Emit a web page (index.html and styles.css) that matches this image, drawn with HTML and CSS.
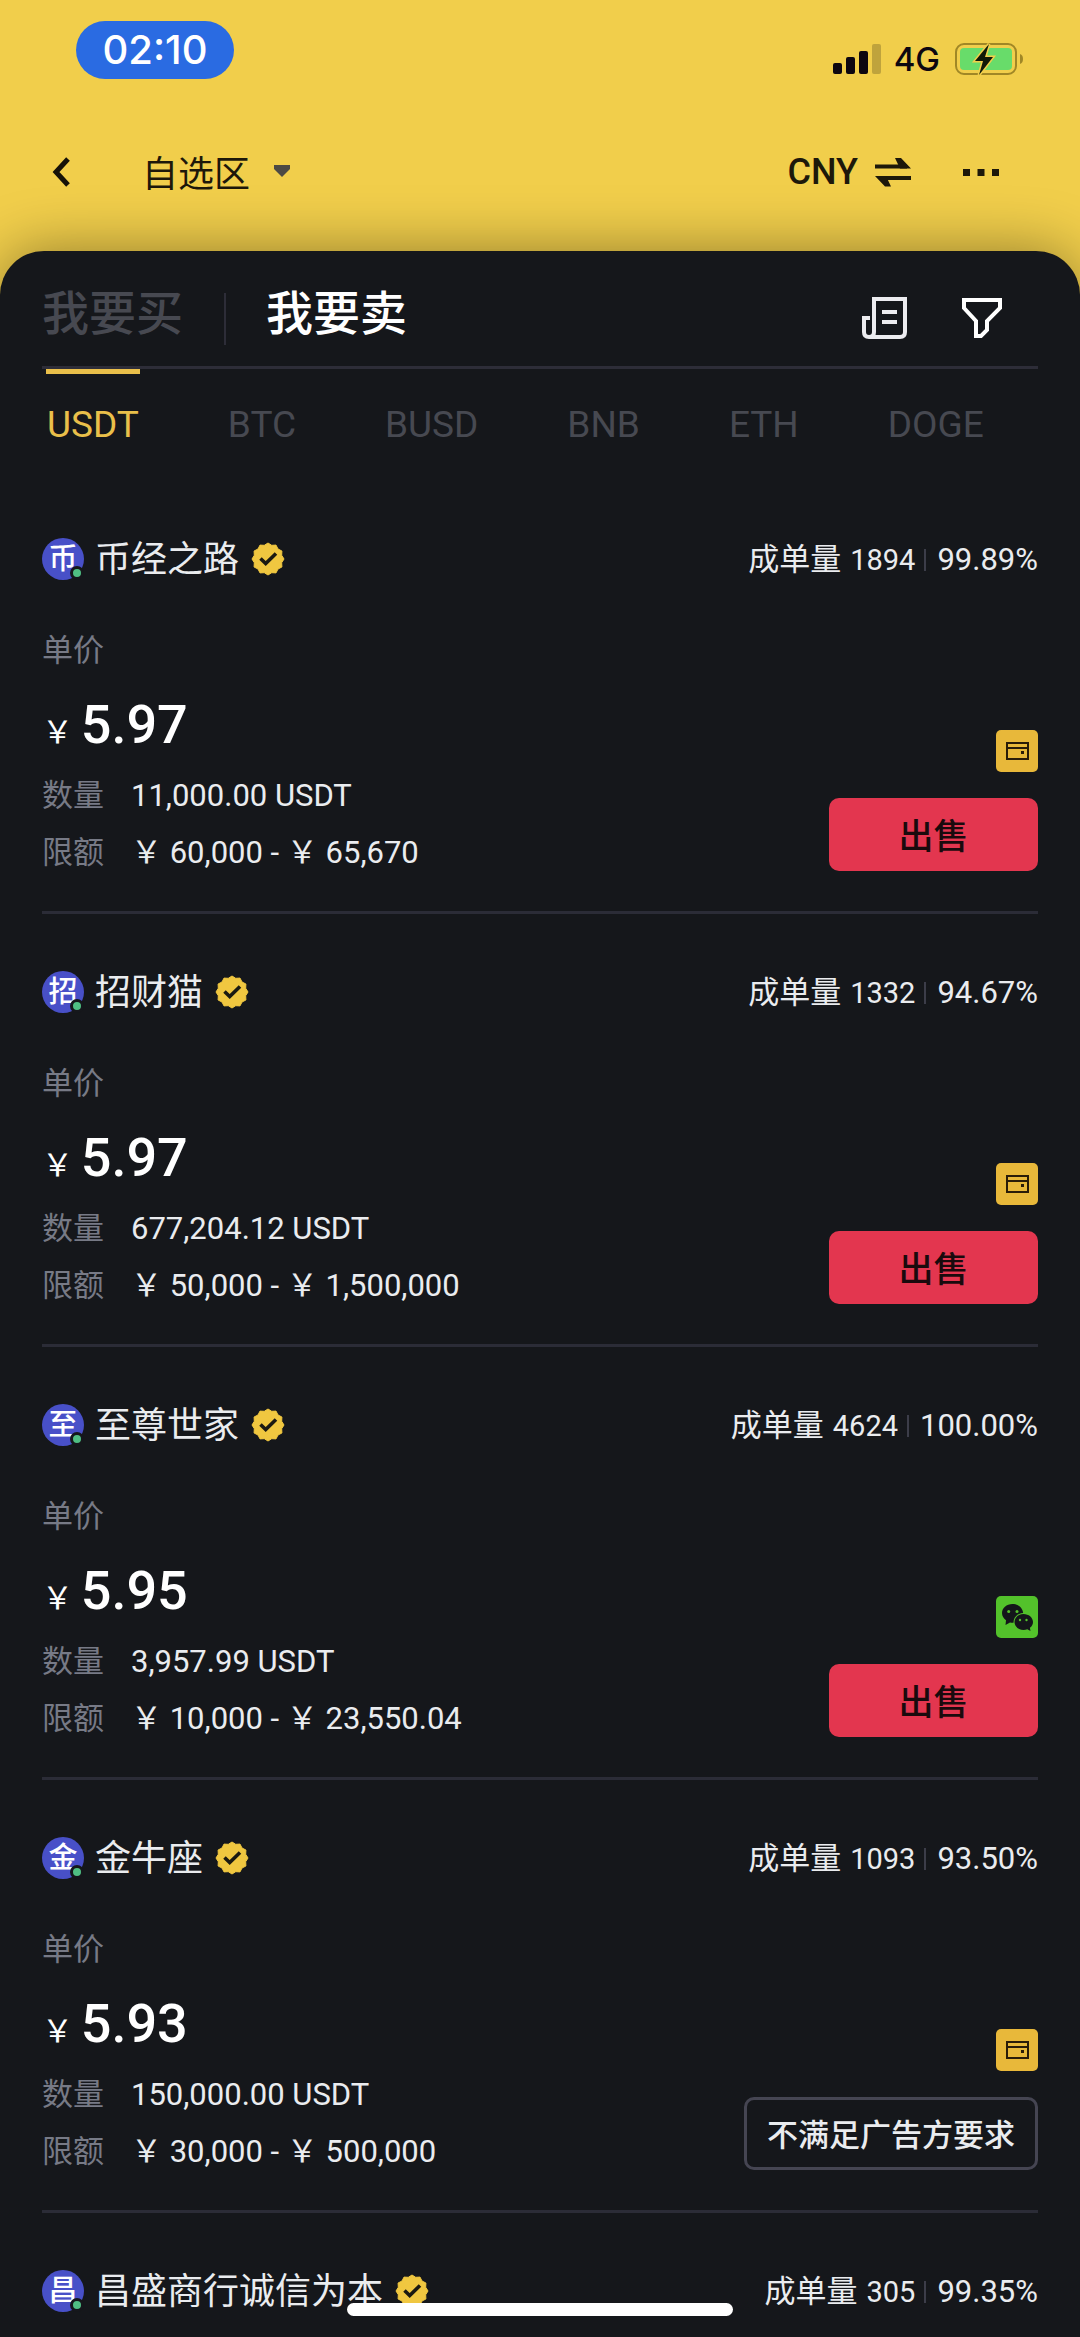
FILE: index.html
```html
<!DOCTYPE html>
<html lang="zh-CN">
<head>
<meta charset="utf-8">
<meta name="viewport" content="width=device-width, initial-scale=1">
<title>自选区</title>
<link rel="stylesheet" href="styles.css">
</head>
<body>
<svg class="sprite" aria-hidden="true">
  <symbol id="badge" viewBox="0 0 34 34">
    <path d="M33 17 30.7 20.7 30.9 25 27 27 25 30.9 20.7 30.7 17 33 13.3 30.7 9 30.9 7 27 3.1 25 3.3 20.7 1 17 3.3 13.3 3.1 9 7 7 9 3.1 13.3 3.3 17 1 20.7 3.3 25 3.1 27 7 30.9 9 30.7 13.3Z" fill="#f0c740" stroke="#f0c740" stroke-width="1" stroke-linejoin="round"/>
    <path d="M9.500 16.500 14.700 21.500 25 11.500" fill="none" stroke="#1b1a12" stroke-width="3.600"/>
  </symbol>
  <symbol id="card" viewBox="0 0 42 42">
    <rect width="42" height="42" rx="5" fill="#e8b83a"/>
    <path d="M11 13h21v16H11zM11 18h21" fill="none" stroke="#2a1c08" stroke-width="2"/>
    <path d="M25 21h3v3h-3z" fill="#2a1c08"/>
  </symbol>
  <symbol id="wechat" viewBox="0 0 42 42">
    <rect width="42" height="42" rx="5" fill="#53c22b"/>
    <path d="M16.500 8C10.500 8 6 12 6 17c0 3 1.600 5.500 4 7.200L9.500 29l4.500-2.500c1 .3 2.500.4 3.500.3 0-6 4-9.300 9.700-9.800C26.500 11.500 22 8 16.500 8z" fill="#14161a"/>
    <path d="M27.500 18c-5 0-9 3.600-9 8s4 8 9 8c1.400 0 2.600-.2 3.800-.7L34.500 35l-.6-3.200c1.900-1.400 3.100-3.400 3.100-5.800 0-4.400-4.300-8-9.500-8z" fill="#14161a"/>
    <g fill="#53c22b"><circle cx="12.700" cy="15.500" r="1.500"/><circle cx="21" cy="15.500" r="1.500"/><circle cx="24" cy="24" r="1.200"/><circle cx="30.500" cy="24" r="1.200"/></g>
  </symbol>
</svg>

<div class="app">
  <header class="top">
    <div class="status">
      <span class="clock">02:10</span>
      <div class="status-right">
        <svg width="49" height="31" viewBox="0 0 49 31" aria-hidden="true"><g fill="#0d0710"><rect x="0" y="19" width="9" height="11" rx="2"/><rect x="13" y="13" width="9" height="17" rx="2"/><rect x="26" y="7" width="9" height="23" rx="2"/></g><rect x="39" y="0" width="9" height="30" rx="2" fill="#bfa33c"/></svg>
        <span class="network">4G</span>
        <svg width="69" height="36" viewBox="0 0 69 36" aria-hidden="true"><rect x="1" y="3" width="60" height="30" rx="8" fill="none" stroke="#a08726" stroke-width="2"/><rect x="5" y="7" width="52" height="22" rx="4" fill="#68dc6a"/><path d="M65 13c4 1 4 9 0 10z" fill="#a08726"/><path d="M34 3 20 20h8l-4 14 14-18h-8z" fill="#101a08" stroke="#f1ce4b" stroke-width="3" paint-order="stroke"/></svg>
      </div>
    </div>
    <nav class="appbar">
      <button class="icon-btn back" aria-label="返回"><svg width="20" height="32" viewBox="0 0 20 32"><path d="M17 3 5 16 17 29" fill="none" stroke="#161208" stroke-width="5"/></svg></button>
      <button class="zone">自选区<svg width="16" height="12" viewBox="0 0 16 12"><path d="M0 0h16v4L8 12 0 4z" fill="#4d4a44"/></svg></button>
      <button class="currency">CNY<svg width="36" height="30" viewBox="0 0 36 30"><path d="M0 9.500h32M4 21h32" stroke="#1d180a" stroke-width="4"/><path d="M20 1h6l10 10.500H25zM16 29.500h-6L0 19h11z" fill="#1d180a"/></svg></button>
      <button class="icon-btn" aria-label="更多"><svg width="36" height="7" viewBox="0 0 36 7"><path d="M0 0h7v7H0zM14.500 0h7v7h-7zM29 0h7v7h-7z" fill="#1d180a"/></svg></button>
    </nav>
  </header>

  <main class="sheet">
    <div class="modes">
      <button class="mode">我要买</button>
      <span class="mode-rule"></span>
      <button class="mode mode-on">我要卖</button>
      <div class="tools">
        <button class="icon-btn" aria-label="订单"><svg width="46" height="42" viewBox="0 0 46 42"><path d="M8 21H2v14q0 5 5 5h31q5 0 5-5V2H12v33q0 5-5 5" fill="none" stroke="#ececf0" stroke-width="4"/><path d="M20 15h15M20 25h15" stroke="#ececf0" stroke-width="4"/></svg></button>
        <button class="icon-btn" aria-label="筛选"><svg width="40" height="40" viewBox="0 0 40 40"><path d="M2 2h36v8L25 23v9l-6 6h-5V23L2 10z" fill="none" stroke="#fff" stroke-width="4"/></svg></button>
      </div>
    </div>
    <nav class="coins">
      <a class="coin coin-on" href="#usdt">USDT</a>
      <a class="coin" href="#btc">BTC</a>
      <a class="coin" href="#busd">BUSD</a>
      <a class="coin" href="#bnb">BNB</a>
      <a class="coin" href="#eth">ETH</a>
      <a class="coin" href="#doge">DOGE</a>
    </nav>

    <div class="offers">
      <article class="offer">
        <div class="offer-head"><span class="avatar">币</span><a class="name" href="#m1">币经之路</a><svg class="badge"><use href="#badge"/></svg><span class="stats">成单量 <span class="count">1894</span><span class="rate">99.89%</span></span></div>
        <div class="offer-body">
          <div class="facts">
            <span class="label">单价</span>
            <p class="price"><span class="yen">&#xFFE5; </span>5.97</p>
            <p class="fact"><span class="label">数量</span><span>11,000.00 USDT</span></p>
            <p class="fact"><span class="label">限额</span><span>&#xFFE5; 60,000 - &#xFFE5; 65,670</span></p>
          </div>
          <div class="action"><svg class="pay"><use href="#card"/></svg><button class="sell">出售</button></div>
        </div>
      </article>

      <article class="offer">
        <div class="offer-head"><span class="avatar">招</span><a class="name" href="#m2">招财猫</a><svg class="badge"><use href="#badge"/></svg><span class="stats">成单量 <span class="count">1332</span><span class="rate">94.67%</span></span></div>
        <div class="offer-body">
          <div class="facts">
            <span class="label">单价</span>
            <p class="price"><span class="yen">&#xFFE5; </span>5.97</p>
            <p class="fact"><span class="label">数量</span><span>677,204.12 USDT</span></p>
            <p class="fact"><span class="label">限额</span><span>&#xFFE5; 50,000 - &#xFFE5; 1,500,000</span></p>
          </div>
          <div class="action"><svg class="pay"><use href="#card"/></svg><button class="sell">出售</button></div>
        </div>
      </article>

      <article class="offer">
        <div class="offer-head"><span class="avatar">至</span><a class="name" href="#m3">至尊世家</a><svg class="badge"><use href="#badge"/></svg><span class="stats">成单量 <span class="count">4624</span><span class="rate">100.00%</span></span></div>
        <div class="offer-body">
          <div class="facts">
            <span class="label">单价</span>
            <p class="price"><span class="yen">&#xFFE5; </span>5.95</p>
            <p class="fact"><span class="label">数量</span><span>3,957.99 USDT</span></p>
            <p class="fact"><span class="label">限额</span><span>&#xFFE5; 10,000 - &#xFFE5; 23,550.04</span></p>
          </div>
          <div class="action"><svg class="pay"><use href="#wechat"/></svg><button class="sell">出售</button></div>
        </div>
      </article>

      <article class="offer">
        <div class="offer-head"><span class="avatar">金</span><a class="name" href="#m4">金牛座</a><svg class="badge"><use href="#badge"/></svg><span class="stats">成单量 <span class="count">1093</span><span class="rate">93.50%</span></span></div>
        <div class="offer-body">
          <div class="facts">
            <span class="label">单价</span>
            <p class="price"><span class="yen">&#xFFE5; </span>5.93</p>
            <p class="fact"><span class="label">数量</span><span>150,000.00 USDT</span></p>
            <p class="fact"><span class="label">限额</span><span>&#xFFE5; 30,000 - &#xFFE5; 500,000</span></p>
          </div>
          <div class="action"><svg class="pay"><use href="#card"/></svg><button class="sell sell-off">不满足广告方要求</button></div>
        </div>
      </article>

      <article class="offer">
        <div class="offer-head"><span class="avatar">昌</span><a class="name" href="#m5">昌盛商行诚信为本</a><svg class="badge"><use href="#badge"/></svg><span class="stats">成单量 <span class="count">305</span><span class="rate">99.35%</span></span></div>
      </article>
    </div>
  </main>
  <div class="home-bar"></div>
</div>
</body>
</html>
```
FILE: styles.css
```css
*, *::before, *::after { box-sizing: border-box; }

body {
  margin: 0;
  background: #f1ce4b;
  color: #eaecef;
  font-family: Roboto, "Noto Sans CJK SC", sans-serif;
  font-size: 31px;
}

button {
  padding: 0;
  border: 0;
  background: none;
  color: inherit;
  font: inherit;
  cursor: pointer;
}

a { color: inherit; text-decoration: none; }
p { margin: 0; }
svg { display: block; flex: none; }
.sprite { position: absolute; width: 0; height: 0; }
.icon-btn { display: flex; align-items: center; }

.app {
  display: flex;
  flex-direction: column;
  height: 100vh;
  overflow: hidden;
}

/* Status bar and app bar */
.status {
  display: flex;
  justify-content: space-between;
  padding: 21px 56px 63px 76px;
}

.clock {
  width: 158px;
  border-radius: 29px;
  background: #2a6be2;
  color: #fff;
  font: 500 40px/57px Inter, sans-serif;
  text-align: center;
}

.status-right {
  display: flex;
  align-items: center;
  gap: 12px;
  padding-top: 18px;
}

.network {
  margin-right: 3px;
  color: #0d0710;
  font: 500 33px/40px Inter, sans-serif;
}

.appbar {
  display: flex;
  align-items: center;
  height: 60px;
  margin-bottom: 49px;
  padding: 0 81px 0 51px;
  color: #1d180a;
  font-size: 36px;
}

.zone, .currency { display: flex; align-items: center; }
.zone { gap: 24px; margin: 0 auto 0 71px; padding-bottom: 2px; }
.currency { gap: 17px; margin-right: 52px; font-weight: 500; }

/* Sheet */
.sheet {
  display: flex;
  flex: 1;
  flex-direction: column;
  min-height: 0;
  padding: 0 42px;
  border-radius: 44px 44px 0 0;
  background: #15171b;
  box-shadow: 0 0 60px rgba(0, 0, 0, 0.4);
}

.modes {
  display: flex;
  align-items: center;
  height: 118px;
  padding-top: 10px;
  border-bottom: 3px solid #2d2d38;
}

.mode {
  color: #474951;
  font-size: 47px;
  font-weight: 500;
  line-height: 56px;
}

.mode-on { color: #fff; }
.mode-rule { width: 2px; height: 52px; margin: 10px 40px 0 41px; background: #2d2d38; }
.tools { display: flex; gap: 54px; margin: 8px 36px 0 auto; }

.coins { display: flex; gap: 89px; padding: 0 5px; }

.coin {
  padding-top: 35px;
  color: #474951;
  font-size: 37px;
  line-height: 42px;
}

.coin-on {
  position: relative;
  color: #e9bf4a;
}

.coin-on::before {
  position: absolute;
  top: 0;
  left: -1px;
  width: 94px;
  height: 5px;
  background: #e9bf4a;
  content: "";
}

/* Offers */
.offers {
  flex: 1;
  min-height: 0;
  margin-top: 35px;
  overflow-y: auto;
  scrollbar-width: none;
}

.offer {
  padding: 57px 0 38px;
  border-bottom: 3px solid #2b2c37;
}

.offer:last-child { padding-bottom: 26px; border-bottom: 0; }

.offer-head { display: flex; align-items: center; height: 42px; }

.avatar {
  position: relative;
  width: 42px;
  border-radius: 50%;
  background: #4850c8;
  color: #fff;
  font-size: 29px;
  font-weight: 500;
  line-height: 42px;
  text-align: center;
}

.avatar::after {
  position: absolute;
  right: 0;
  bottom: 0;
  width: 14px;
  height: 14px;
  border: 3px solid #15171b;
  border-radius: 50%;
  background: #4fbf83;
  content: "";
}

.name { margin: 0 12px 0 11px; padding-top: 2px; font-size: 36px; line-height: 42px; }
.badge { width: 34px; height: 34px; }
.stats { display: flex; align-items: baseline; gap: 9px; margin-left: auto; padding-top: 2px; line-height: 42px; }
.count { font-size: 29px; }
.rate { padding-left: 11px; border-left: 2px solid #3c3d49; line-height: 22px; }

.offer-body {
  display: flex;
  align-items: flex-end;
  justify-content: space-between;
  margin-top: 51px;
}

.label { color: #777a86; font-size: 31px; line-height: 40px; }
.facts > .label { display: block; }

.price {
  margin: 22px 0 19px;
  color: #fff;
  font-size: 54px;
  font-weight: 500;
  line-height: 64px;
}

.yen { font-size: 31px; font-weight: 400; line-height: 1; }

.fact { display: flex; gap: 27px; font-size: 31px; line-height: 40px; }
.fact + .fact { margin-top: 17px; }

.action { display: flex; flex-direction: column; align-items: flex-end; gap: 26px; padding-bottom: 2px; }
.pay { width: 42px; height: 42px; }

.sell {
  min-width: 209px;
  height: 73px;
  padding-bottom: 2px;
  border-radius: 10px;
  background: #e3364f;
  color: #1a0a0d;
  font-size: 35px;
  font-weight: 500;
}

.sell-off {
  padding: 0 20px 2px;
  border: 3px solid #454552;
  background: none;
  color: #eaecef;
  font-size: 31px;
}

.home-bar {
  position: fixed;
  bottom: 21px;
  left: 50%;
  width: 386px;
  height: 13px;
  margin-left: -193px;
  border-radius: 7px;
  background: #fff;
}
```
